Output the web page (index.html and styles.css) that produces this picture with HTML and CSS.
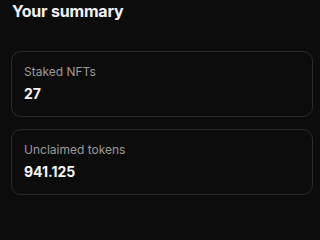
FILE: index.html
```html
<!DOCTYPE html>
<html lang="en">
<head>
<meta charset="utf-8">
<title>Your summary</title>
<link rel="stylesheet" href="styles.css">
</head>
<body>
<main class="summary">
  <h2 class="summary-title">Your summary</h2>
  <div class="cards">
    <section class="card">
      <div class="card-label">Staked NFTs</div>
      <div class="card-value">27</div>
    </section>
    <section class="card">
      <div class="card-label">Unclaimed tokens</div>
      <div class="card-value">941.125</div>
    </section>
  </div>
</main>
</body>
</html>
```
FILE: styles.css
```css
html, body {
  margin: 0;
  padding: 0;
  background: #0c0c0c;
}
body {
  font-family: Inter, "Liberation Sans", sans-serif;
  color: #ffffff;
}
.summary {
  padding: 1px 7px 0 11px;
  display: flex;
  flex-direction: column;
  gap: 30px;
}
.summary-title {
  margin: 0;
  padding-left: 1px;
  font-size: 16px;
  line-height: 20px;
  font-weight: 700;
  letter-spacing: -0.2px;
  color: #f2f2f2;
}
.cards {
  display: flex;
  flex-direction: column;
  gap: 12px;
}
.card {
  border: 1px solid #2a2a2a;
  border-radius: 10px;
  padding: 12px 12px 13px 12px;
  display: flex;
  flex-direction: column;
  gap: 5px;
}
.card-label {
  font-size: 12px;
  line-height: 16px;
  color: #9b9b9b;
}
.card-value {
  font-size: 14px;
  line-height: 18px;
  font-weight: 700;
  color: #f5f5f5;
}
```
